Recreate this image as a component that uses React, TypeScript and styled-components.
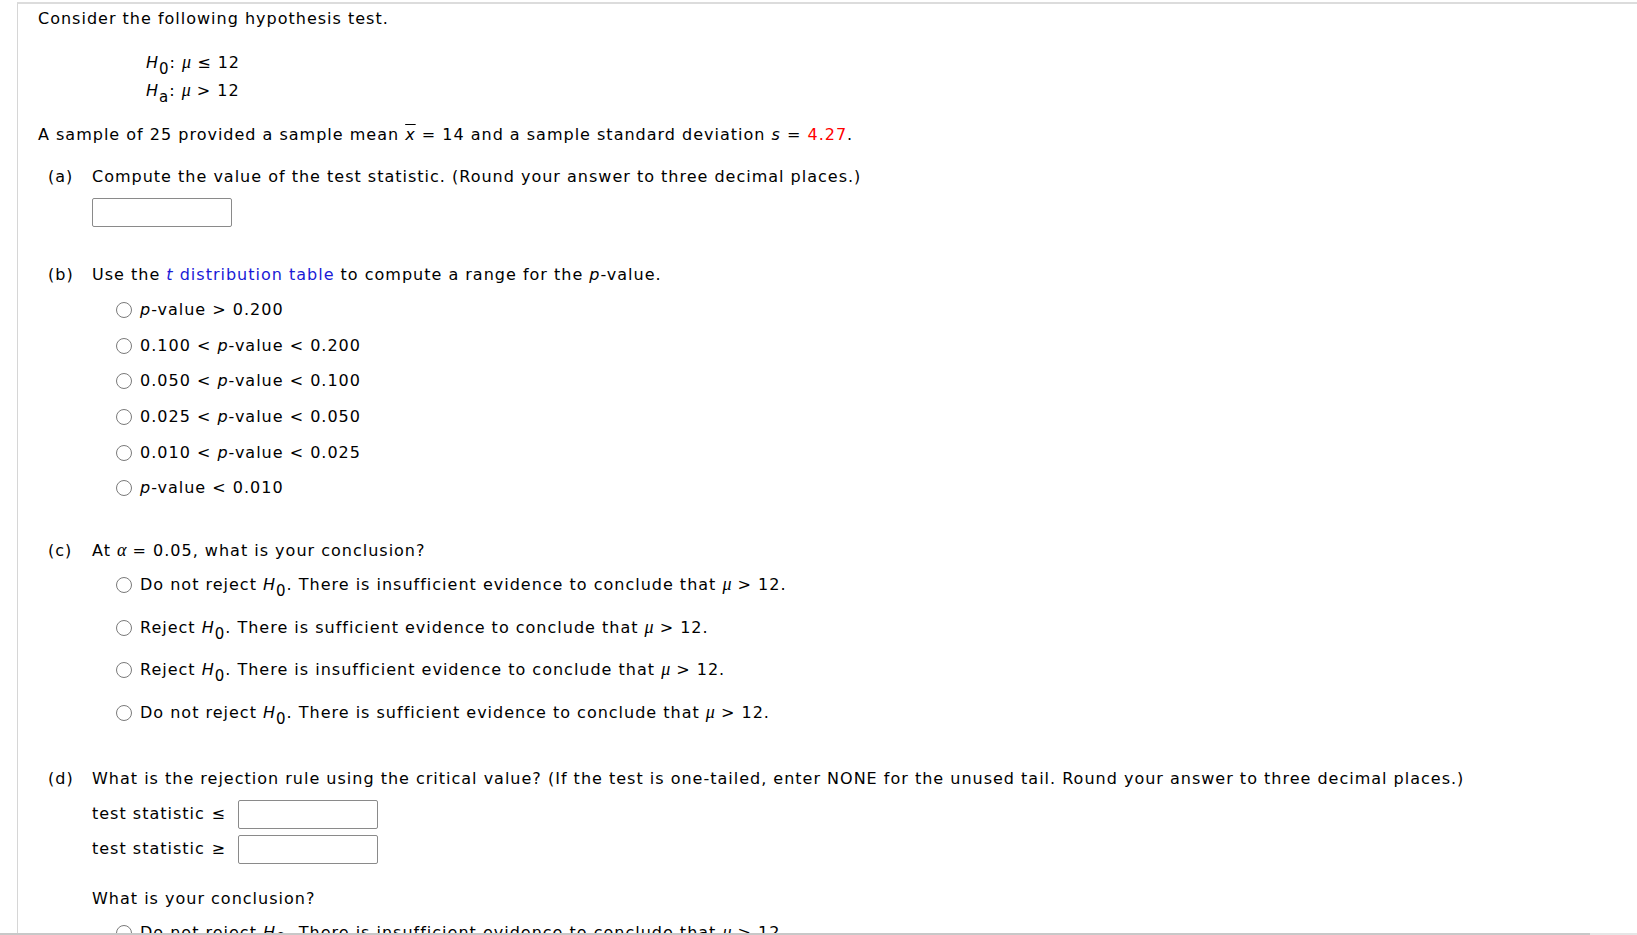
import React from "react";
import styled, { createGlobalStyle } from "styled-components";

const Global = createGlobalStyle`
  html, body { margin: 0; padding: 0; background: #fff; }
  body { font-family: "DejaVu Sans", Verdana, sans-serif; font-size: 16px; letter-spacing: 1px; color: #000; }
`;

const Frame = styled.div`
  height: 935px;
  display: flex;
  flex-direction: column;
  overflow: hidden;
`;

const Panel = styled.div`
  flex: 1;
  margin-left: 17px;
  margin-top: 2px;
  border-left: 1px solid #d6d6d6;
  border-top: 2px solid #dcdcdc;
  overflow: hidden;
  padding: 4px 0 0 20px;
`;

const Scrollbar = styled.div`
  height: 2px;
  display: flex;
  background: #e6e6e6;
`;

const Thumb = styled.div`
  width: 1590px;
  background: #c8c8c8;
`;

const P = styled.div<{ $mt?: number }>`
  margin-top: ${(p) => p.$mt ?? 0}px;
  line-height: 22px;
  white-space: nowrap;
`;

const Hyp = styled.div`
  margin-top: 22px;
  margin-left: 108px;
  display: flex;
  flex-direction: column;
  gap: 6px;
`;

const HypLine = styled.div`
  line-height: 22px;
`;

const I = styled.i`
  font-style: italic;
`;

const Greek = styled.i`
  font-family: "Liberation Serif", "Times New Roman", serif;
  font-style: italic;
  font-size: 18px;
  line-height: 1;
  letter-spacing: 0;
`;

const Sub = styled.sub`
  font-size: 15px;
  vertical-align: -6px;
  line-height: 0;
`;

const Bar = styled.i`
  font-style: italic;
  text-decoration: overline;
  text-decoration-thickness: 1px;
`;

const Red = styled.span`
  color: #ff0000;
`;

const Link = styled.span`
  color: #1a1ad6;
`;

const Part = styled.div<{ $mt: number }>`
  margin-top: ${(p) => p.$mt}px;
  margin-left: 10px;
  display: grid;
  grid-template-columns: 44px 1fr;
`;

const Label = styled.div`
  line-height: 22px;
`;

const Body = styled.div`
  display: flex;
  flex-direction: column;
`;

const Question = styled.div<{ $mt?: number }>`
  margin-top: ${(p) => p.$mt ?? 0}px;
  line-height: 22px;
  white-space: nowrap;
`;

const BoxWrap = styled.div`
  margin-top: 10px;
`;

const TextBox = styled.div<{ $w: number }>`
  width: ${(p) => p.$w}px;
  height: 27px;
  border: 1px solid #8a8a8a;
  border-radius: 2px;
  background: #fff;
`;

const Options = styled.div<{ $gap: number; $mt: number }>`
  display: flex;
  flex-direction: column;
  gap: ${(p) => p.$gap}px;
  margin-top: ${(p) => p.$mt}px;
  margin-left: 24px;
`;

const Option = styled.label`
  display: flex;
  align-items: center;
  gap: 8px;
  height: 22px;
  line-height: 22px;
  white-space: nowrap;
`;

const Radio = styled.span`
  width: 14px;
  height: 14px;
  border: 1px solid #7a7a7a;
  border-radius: 50%;
  flex: none;
  background: #fff;
`;

const RuleRow = styled.div`
  display: flex;
  align-items: center;
  gap: 12px;
  line-height: 22px;
  white-space: nowrap;
`;

const RuleText = styled.span`
  width: 134px;
  display: flex;
  justify-content: space-between;
`;

const Rules = styled.div`
  display: flex;
  flex-direction: column;
  gap: 6px;
  margin-top: 10px;
`;

const H0 = () => (
  <>
    <I>H</I>
    <Sub>0</Sub>
  </>
);

const mu = <Greek>μ</Greek>;

const pOptions: React.ReactNode[] = [
  <><I>p</I>-value &gt; 0.200</>,
  <>0.100 &lt; <I>p</I>-value &lt; 0.200</>,
  <>0.050 &lt; <I>p</I>-value &lt; 0.100</>,
  <>0.025 &lt; <I>p</I>-value &lt; 0.050</>,
  <>0.010 &lt; <I>p</I>-value &lt; 0.025</>,
  <><I>p</I>-value &lt; 0.010</>,
];

const conclusions: React.ReactNode[] = [
  <>Do not reject <H0 />. There is insufficient evidence to conclude that {mu} &gt; 12.</>,
  <>Reject <H0 />. There is sufficient evidence to conclude that {mu} &gt; 12.</>,
  <>Reject <H0 />. There is insufficient evidence to conclude that {mu} &gt; 12.</>,
  <>Do not reject <H0 />. There is sufficient evidence to conclude that {mu} &gt; 12.</>,
];

const RadioList = ({ items, gap, mt }: { items: React.ReactNode[]; gap: number; mt: number }) => (
  <Options $gap={gap} $mt={mt}>
    {items.map((o, i) => (
      <Option key={i}>
        <Radio />
        <span>{o}</span>
      </Option>
    ))}
  </Options>
);

export default function App() {
  return (
    <Frame>
      <Global />
      <Panel>
        <P>Consider the following hypothesis test.</P>
        <Hyp>
          <HypLine>
            <H0 />: {mu} ≤ 12
          </HypLine>
          <HypLine>
            <I>H</I>
            <Sub>a</Sub>: {mu} &gt; 12
          </HypLine>
        </Hyp>
        <P $mt={22}>
          A sample of 25 provided a sample mean <Bar>x</Bar> = 14 and a sample standard deviation <I>s</I> ={" "}
          <Red>4.27</Red>.
        </P>

        <Part $mt={20}>
          <Label>(a)</Label>
          <Body>
            <Question>Compute the value of the test statistic. (Round your answer to three decimal places.)</Question>
            <BoxWrap>
              <TextBox $w={138} />
            </BoxWrap>
          </Body>
        </Part>

        <Part $mt={37}>
          <Label>(b)</Label>
          <Body>
            <Question>
              Use the <Link><I>t</I> distribution table</Link> to compute a range for the <I>p</I>-value.
            </Question>
            <RadioList items={pOptions} gap={13.7} mt={13} />
          </Body>
        </Part>

        <Part $mt={41}>
          <Label>(c)</Label>
          <Body>
            <Question>
              At <Greek>α</Greek> = 0.05, what is your conclusion?
            </Question>
            <RadioList items={conclusions} gap={20.5} mt={12} />
          </Body>
        </Part>

        <Part $mt={44}>
          <Label>(d)</Label>
          <Body>
            <Question>
              What is the rejection rule using the critical value? (If the test is one-tailed, enter NONE for the unused
              tail. Round your answer to three decimal places.)
            </Question>
            <Rules>
              <RuleRow>
                <RuleText>
                  <span>test statistic</span>
                  <span>≤</span>
                </RuleText>
                <TextBox $w={138} />
              </RuleRow>
              <RuleRow>
                <RuleText>
                  <span>test statistic</span>
                  <span>≥</span>
                </RuleText>
                <TextBox $w={138} />
              </RuleRow>
            </Rules>
            <Question $mt={24}>What is your conclusion?</Question>
            <RadioList items={conclusions} gap={20.5} mt={12} />
          </Body>
        </Part>
      </Panel>
      <Scrollbar>
        <Thumb />
      </Scrollbar>
    </Frame>
  );
}
